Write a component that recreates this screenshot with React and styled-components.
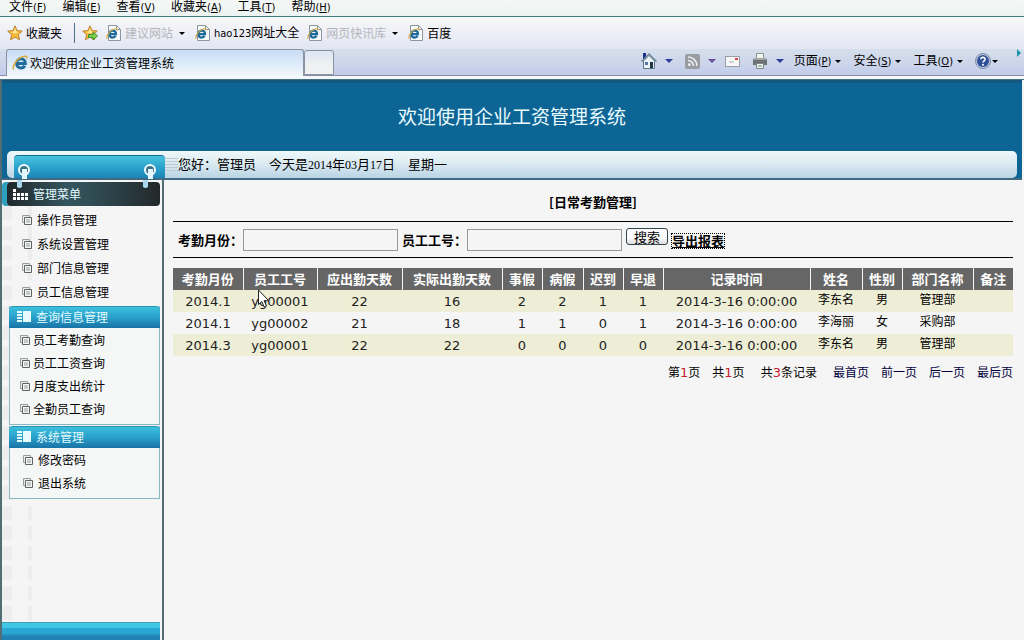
import React from "react";
import styled, { createGlobalStyle, css } from "styled-components";

const GlobalStyle = createGlobalStyle`
  *, *::before, *::after { box-sizing: border-box; }
  body {
    margin: 0;
    background: #f5f5f5;
    color: #000;
    font: 12px/16px "Noto Sans CJK SC", sans-serif;
  }
  button { font: inherit; color: inherit; background: none; border: 0; padding: 0; }
  a { color: inherit; text-decoration: none; }
  ul { list-style: none; margin: 0; padding: 0; }
  h1, h2, h3, p { margin: 0; font-size: inherit; font-weight: inherit; }
  svg { display: block; flex: none; }
`;

const Page = styled.div`
  display: flex;
  flex-direction: column;
  min-height: 100vh;
`;

/* Browser chrome */
const Latin = styled.span`
  font-family: "DejaVu Sans Condensed", "DejaVu Sans", sans-serif;
  font-size: 11px;
`;

const MenuBar = styled.nav`
  display: flex;
  align-items: flex-start;
  gap: 16px;
  height: 17px;
  padding: 0 9px;
  background: linear-gradient(#f5f7f6, #ecf4f3);
  border-bottom: 1px solid #3d7c80;
  line-height: 12px;
  white-space: nowrap;
`;

const FavoritesBar = styled.nav`
  display: flex;
  align-items: center;
  height: 32px;
  padding: 0 7px;
  background: linear-gradient(#f6f8f7 0%, #f0f0f7 40%, #e2e6f3 100%);
  white-space: nowrap;
`;

const FavButton = styled.button`
  display: flex;
  align-items: center;
  gap: 3px;
  margin-right: ${(p) => p.$after || 10}px;
  color: ${(p) => (p.$dim ? "#b4b5bb" : "#000")};
`;

const Separator = styled.span`
  width: 1px;
  height: 20px;
  margin-right: 7px;
  background: #4d7388;
`;

const Caret = styled.span`
  border: ${(p) => p.$size || 3}px solid transparent;
  border-top-color: ${(p) => p.$color || "#000"};
  border-bottom: 0;
  margin-left: ${(p) => p.$gap || 0}px;
`;

const TabBar = styled.div`
  display: flex;
  align-items: flex-end;
  height: 27px;
  padding-left: 6px;
  background: linear-gradient(#d5dfec, #cdd6ea 50%, #c2cceb);
  border-bottom: 1px solid #8c8ea6;
`;

const Tab = styled.button`
  display: flex;
  align-items: center;
  gap: 2px;
  width: 298px;
  height: 27px;
  margin-bottom: -1px;
  padding: 0 5px;
  border: 1px solid #8a93a3;
  border-bottom: 0;
  border-radius: 3px 3px 0 0;
  background: linear-gradient(#c9dcf3, #dcebf9 50%, #f1f6fa);
`;

const NewTab = styled.button`
  width: 30px;
  height: 25px;
  border: 1px solid #8a93a3;
  border-radius: 3px 3px 0 0;
  background: linear-gradient(#dbe5f2, #eff1f2 60%);
`;

const CommandBar = styled.div`
  display: flex;
  align-items: center;
  height: 26px;
  margin-left: auto;
  padding: 0 3px 2px 0;
  white-space: nowrap;
`;

const Command = styled.button`
  display: flex;
  align-items: center;
  margin-right: ${(p) => p.$after || 12}px;
`;

const MoreArrow = styled.span`
  align-self: flex-start;
  margin-left: 18px;
  border: 4px solid transparent;
  border-left-color: #1a93a6;
  border-right: 0;
`;

const ChromeEdge = styled.div`
  height: 4px;
  background: #f3f8fb;
  border-bottom: 1px solid #466f80;
`;

/* Application shell */
const Shell = styled.div`
  display: flex;
  flex: 1;
  flex-direction: column;
  border-left: 2px solid #536d75;
`;

const Banner = styled.header`
  margin-right: 2px;
  background: #0d6595;
  border-bottom: 2px solid #3f6a80;
`;

const BannerTitle = styled.h1`
  padding: 17px 0 19px;
  color: #e9fbff;
  font-size: 19px;
  line-height: 32px;
  text-align: center;
  border-top: 3px solid #145a80;
`;

const InfoBar = styled.div`
  display: flex;
  align-items: center;
  height: 27px;
  margin: 0 5px;
  border-radius: 5px;
  background: linear-gradient(#eef8f9, #dcebf2 45%, #b9d4e4);
  font-size: 13px;
`;

const BinderTab = styled.div`
  position: relative;
  align-self: flex-end;
  width: 151px;
  height: 23px;
  margin-left: 7px;
  border-radius: 4px 4px 0 0;
  border-top: 1px solid #156a91;
  background: linear-gradient(#48c3df, #2ba3cc 50%, #1c84b6);
`;

const Hook = styled.svg`
  position: absolute;
  top: 7px;
  left: ${(p) => p.$left}px;
  z-index: 2;
`;

const Grip = styled.span`
  width: 13px;
  height: 14px;
  background: repeating-linear-gradient(#bccbd2 0 1px, transparent 1px 3px);
`;

const Greeting = styled.p`
  display: flex;
  gap: 13px;
  white-space: nowrap;
`;

const DateNumber = styled.span`
  font: 12px "Liberation Serif", serif;
`;

const Body = styled.div`
  display: flex;
  flex: 1;
`;

/* Sidebar */
const Sidebar = styled.aside`
  display: flex;
  flex: none;
  flex-direction: column;
  width: 162px;
  border-right: 2px solid #536d75;
  padding-right: 2px;
  background:
    repeating-linear-gradient(#f5f5f5 0 6px, transparent 6px 20px) 0 0 / 30px 100% no-repeat,
    linear-gradient(90deg, #ededed 10px, #f5f5f5 10px 26px, #ededed 26px) 0 0 / 30px 100% no-repeat;
`;

const Section = styled.section`
  margin: ${(p) => (p.$dark ? "0" : "0 0 1px 7px")};
  ${(p) =>
    !p.$dark &&
    css`
      border: 1px solid #86b7c5;
      border-top: 0;
      background: #f5f7f7;
    `}
`;

const SectionTitle = styled.h2`
  display: flex;
  align-items: center;
  gap: 5px;
  color: #e2fbff;
  ${(p) =>
    p.$dark
      ? css`
          height: 24px;
          margin: 2px 0 0 5px;
          padding-left: 6px;
          border-radius: 4px;
          background: linear-gradient(90deg, #20282b, #35565f 40%, #2c4148 70%, #23282a);
          box-shadow: -5px 0 0 #2da0bd;
        `
      : css`
          height: 22px;
          margin: 0 -1px;
          padding: 0 0 2px 8px;
          border-radius: 4px 4px 0 0;
          border-top: 1px solid #2a93b5;
          background: linear-gradient(#3cc0dc, #2a9fca 50%, #1873a6);
        `}
`;

const MenuList = styled.ul`
  padding: ${(p) => p.$pad};
`;

const MenuItem = styled.li`
  height: ${(p) => p.$row}px;
`;

const MenuLink = styled.a`
  display: flex;
  align-items: center;
  gap: ${(p) => p.$gap}px;
  height: 100%;
`;

const SidebarFoot = styled.div`
  height: 18px;
  margin-top: auto;
  border-top: 1px solid #3f9fb5;
  background: linear-gradient(#41c7e4 0 30%, #2aa6d3 30% 60%, #2181b5 80%);
`;

/* Content */
const Content = styled.main`
  flex: 1;
  min-width: 0;
  padding: 14px 11px 0 9px;
`;

const PageTitle = styled.h2`
  padding-bottom: 11px;
  font-size: 13px;
  font-weight: 700;
  text-align: center;
`;

const SearchForm = styled.form`
  display: flex;
  align-items: center;
  height: 37px;
  margin-bottom: 10px;
  padding-left: 5px;
  border: solid #000;
  border-width: 1px 0;
  font-size: 13px;
  white-space: nowrap;
`;

const Label = styled.label`
  font-weight: 700;
`;

const TextInput = styled.input`
  width: 155px;
  height: 22px;
  margin-right: 4px;
  padding: 0 4px;
  border: 1px solid #8f9b9d;
  background: #f5f5f5;
  font: inherit;
`;

const SearchButton = styled.button`
  width: 42px;
  height: 17px;
  margin: 0 4px 6px 0;
  border: 1px solid #33444c;
  border-radius: 3px;
  background: linear-gradient(#fbfbfb 60%, #dcdcdc);
  line-height: 15px;
`;

const ExportLink = styled.a`
  margin-top: 2px;
  font-weight: 700;
  line-height: 14px;
  outline: 1px dotted #000;
  text-decoration: underline;
`;

const Table = styled.table`
  width: 100%;
  table-layout: fixed;
  border-collapse: collapse;
  text-align: center;
  white-space: nowrap;
`;

const Col = styled.col`
  width: ${(p) => (p.$w ? `${p.$w}px` : "auto")};
`;

const Th = styled.th`
  height: 22px;
  padding: 0;
  background: #666;
  color: #fff;
  font-size: 13px;
  & + & { border-left: 1px solid #f5f5f5; }
`;

const Row = styled.tr`
  background: ${(p) => (p.$odd ? "#eeeed6" : "#f5f5f5")};
`;

const Td = styled.td`
  position: relative;
  height: 22px;
  padding: ${(p) => (p.$text ? "0 0 2px" : "1px 0 0")};
  color: ${(p) => (p.$text ? "#000" : "#222")};
  font-family: "DejaVu Sans", "Noto Sans CJK SC", sans-serif;
  font-size: ${(p) => (p.$text ? 12 : 13)}px;
`;

const Cursor = styled.svg`
  position: absolute;
  top: -1px;
  left: 15px;
`;

const Pager = styled.nav`
  display: flex;
  justify-content: flex-end;
  gap: 12px;
  padding-top: 8px;
  white-space: nowrap;
`;

const PagerText = styled.span`
  margin-right: ${(p) => (p.$wide ? 4 : 0)}px;
`;

const PagerNumber = styled.span`
  color: #c8202c;
  font: 13px "DejaVu Sans", sans-serif;
`;

const PagerLink = styled.a`
  color: #00003c;
`;

/* Icons */
const EMark = () => (
  <>
    <path d="M4.500 9h8C12.500 6 10.500 4.600 8.400 4.600 6 4.600 4.400 6.500 4.400 9s1.600 4.200 4 4.200c1.700 0 2.900-.8 3.500-2.200" fill="none" stroke="#1f6c9c" strokeWidth="2.800" />
    <path d="M1.800 14.600C-.5 12.500 4 5 9.500 2.800c3-1.200 5-.8 4.400 1.500" fill="none" stroke="#d9a63a" strokeWidth="1.400" />
  </>
);

const IePage = () => (
  <svg width="16" height="16" viewBox="0 0 16 16" aria-hidden="true">
    <path d="M2.500.5h8l4 4v11h-12z" fill="#f8fafb" stroke="#8b969c" />
    <path d="M10.500.5v4h4" fill="none" stroke="#8b969c" />
    <g transform="translate(0 2) scale(.8)"><EMark /></g>
  </svg>
);

const IeLogo = () => (
  <svg width="16" height="16" viewBox="0 1 15 15" aria-hidden="true"><EMark /></svg>
);

const Star = ({ add }) => (
  <svg width="16" height="16" viewBox="0 0 16 16" aria-hidden="true">
    <path d="M8 .8l2.100 4.800 5.200.5-3.900 3.500 1.100 5.200L8 12.100l-4.500 2.700 1.100-5.200L.7 6.100l5.200-.5z" fill="#fbb93a" stroke="#b98432" />
    <path d="M8 3l1.200 3.500 2.800.5-4 1.500L4 7l2.800-.5z" fill="#fdeaa0" />
    {add && <path d="M6.500 9.500h4.500v-2.500l4.500 4-4.500 4v-2.500H6.500z" fill="#7ed04a" stroke="#3d8f2b" />}
  </svg>
);

const Home = () => (
  <svg width="16" height="16" viewBox="0 0 16 16" aria-hidden="true">
    <path d="M2 0h3v6H2z" fill="#1f2f8f" />
    <path d="M2.500 8v7.500h11V8L8 2.500z" fill="#edf3f6" stroke="#5b7889" />
    <path d="M.5 8.500L8 1l7.500 7.500" fill="none" stroke="#6c8496" strokeWidth="1.400" />
    <path d="M4 9h3v3H4z" fill="#53779e" />
    <path d="M9 9h3v6H9z" fill="#1d3447" />
  </svg>
);

const Feed = () => (
  <svg width="15" height="15" viewBox="0 0 15 15" aria-hidden="true">
    <rect width="15" height="15" rx="2" fill="#999ca1" />
    <path d="M3 6.500A5.500 5.500 0 018.500 12M3 3a9 9 0 019 9" fill="none" stroke="#eef0f4" strokeWidth="1.500" />
    <circle cx="4.300" cy="10.700" r="1.400" fill="#eef0f4" />
  </svg>
);

const Mail = () => (
  <svg width="15" height="11" viewBox="0 0 15 11" aria-hidden="true">
    <rect x=".5" y=".5" width="14" height="10" fill="#f7f7f8" stroke="#9a9ca6" />
    <path d="M10 2h3v2h-3z" fill="#d8404a" />
    <path d="M4 6h5" stroke="#b0b3bd" />
  </svg>
);

const Printer = () => (
  <svg width="16" height="16" viewBox="0 0 16 16" aria-hidden="true">
    <path d="M4.500.5h7v6h-7z" fill="#f4f5f2" stroke="#8b9093" />
    <path d="M1 6h14v6H1z" fill="#6d7375" />
    <path d="M2 5h12v2H2z" fill="#a1a7a6" />
    <path d="M4.500 10.500h7v5h-7z" fill="#eef4f0" stroke="#7c8588" />
    <path d="M6 13h4" stroke="#4b9a5d" />
  </svg>
);

const Help = () => (
  <svg width="16" height="16" viewBox="0 0 16 16" aria-hidden="true">
    <circle cx="8" cy="8" r="7.500" fill="#b6c3dd" stroke="#7e8aa9" />
    <circle cx="8" cy="8" r="6" fill="#2f5098" />
    <path d="M5.800 6.300C5.800 3.700 10.300 3.800 10.200 6.300 10.100 7.800 8 7.900 8 9.600" fill="none" stroke="#fff" strokeWidth="1.600" />
    <circle cx="8" cy="11.700" r="1" fill="#fff" />
  </svg>
);

const Sheets = () => (
  <svg width="10" height="10" viewBox="0 0 10 10" aria-hidden="true">
    <path d="M.5.500h7v7h-7z" fill="#eceeee" stroke="#9a9d9d" />
    <path d="M2.500 2.500h7v7h-7z" fill="#f4f5f5" stroke="#5e6262" />
    <path d="M4 5h4M4 7h4" stroke="#9a9d9d" />
  </svg>
);

const Dots = () => (
  <svg width="15" height="11" viewBox="0 0 15 11" aria-hidden="true" fill="#fff">
    <path d="M0 0h3v3H0zM0 4h3v3H0zM4 4h3v3H4zM8 4h3v3H8zM12 4h3v3h-3zM0 8h3v3H0zM4 8h3v3H4zM8 8h3v3H8zM12 8h3v3h-3z" />
  </svg>
);

const Panel = () => (
  <svg width="14" height="11" viewBox="0 0 14 11" aria-hidden="true" fill="#e8fbff">
    <path d="M6 0h8v11H6zM0 0h5v2H0zM0 3h5v2H0zM0 6h5v2H0zM0 9h5v2H0z" />
  </svg>
);

const BinderHook = ({ left }) => (
  <Hook $left={left} width="16" height="26" viewBox="0 0 16 26" aria-hidden="true">
    <circle cx="8" cy="7" r="5" fill="#3a7186" stroke="#f1fbfd" strokeWidth="2" />
    <path d="M6 6h5v10H6z" fill="#e4f5fb" />
    <path d="M1 17h5v7q-2.500 2-5 0z" fill="#a9d8ee" />
  </Hook>
);

const browserMenus = [["文件", "F"], ["编辑", "E"], ["查看", "V"], ["收藏夹", "A"], ["工具", "T"], ["帮助", "H"]];
const commands = [["页面", "P"], ["安全", "S"], ["工具", "O"]];

const Access = ({ label, letter }) => (
  <span>{label}<Latin>(<u>{letter}</u>)</Latin></span>
);

const sections = [
  { title: "管理菜单", dark: true, row: 24, gap: 5, pad: "2px 0 2px 20px", items: ["操作员管理", "系统设置管理", "部门信息管理", "员工信息管理"] },
  { title: "查询信息管理", row: 23, gap: 3, pad: "0 0 4px 10px", items: ["员工考勤查询", "员工工资查询", "月度支出统计", "全勤员工查询"] },
  { title: "系统管理", row: 23, gap: 5, pad: "0 0 4px 13px", items: ["修改密码", "退出系统"] },
];

const columns = [
  ["考勤月份", 70], ["员工工号", 74], ["应出勤天数", 85], ["实际出勤天数", 100],
  ["事假", 40], ["病假", 41], ["迟到", 40], ["早退", 40], ["记录时间", 0],
  ["姓名", 52], ["性别", 40], ["部门名称", 71], ["备注", 40],
];

const records = [
  ["2014.1", "yg00001", "22", "16", "2", "2", "1", "1", "2014-3-16 0:00:00", "李东名", "男", "管理部", ""],
  ["2014.1", "yg00002", "21", "18", "1", "1", "0", "1", "2014-3-16 0:00:00", "李海丽", "女", "采购部", ""],
  ["2014.3", "yg00001", "22", "22", "0", "0", "0", "0", "2014-3-16 0:00:00", "李东名", "男", "管理部", ""],
];

export default function App() {
  return (
    <Page>
      <GlobalStyle />
      <MenuBar>
        {browserMenus.map(([label, letter]) => (
          <button key={letter} type="button"><Access label={label} letter={letter} /></button>
        ))}
      </MenuBar>
      <FavoritesBar>
        <FavButton type="button" $after={12}><Star />收藏夹</FavButton>
        <Separator />
        <FavButton type="button" $after={8} aria-label="添加到收藏夹栏"><Star add /></FavButton>
        <FavButton type="button" $dim><IePage />建议网站<Caret $gap={3} /></FavButton>
        <FavButton type="button" $after={8}><IePage /><span><Latin>hao123</Latin>网址大全</span></FavButton>
        <FavButton type="button" $dim><IePage />网页快讯库<Caret $gap={3} /></FavButton>
        <FavButton type="button"><IePage />百度</FavButton>
      </FavoritesBar>
      <TabBar>
        <Tab type="button"><IeLogo />欢迎使用企业工资管理系统</Tab>
        <NewTab type="button" aria-label="新选项卡" />
        <CommandBar>
          <Command type="button" aria-label="主页"><Home /><Caret $gap={8} $size={4} $color="#2c3f9c" /></Command>
          <Command type="button" $after={9} aria-label="源"><Feed /><Caret $gap={8} $size={4} $color="#6b4a9c" /></Command>
          <Command type="button" aria-label="阅读邮件"><Mail /></Command>
          <Command type="button" $after={10} aria-label="打印"><Printer /><Caret $gap={8} $size={4} $color="#2c3f9c" /></Command>
          {commands.map(([label, letter]) => (
            <Command key={letter} type="button"><Access label={label} letter={letter} /><Caret $gap={4} /></Command>
          ))}
          <Command type="button" $after={1} aria-label="帮助"><Help /><Caret $gap={1} /></Command>
          <MoreArrow />
        </CommandBar>
      </TabBar>
      <ChromeEdge />
      <Shell>
        <Banner>
          <BannerTitle>欢迎使用企业工资管理系统</BannerTitle>
          <InfoBar>
            <BinderTab>
              <BinderHook left={2} />
              <BinderHook left={128} />
            </BinderTab>
            <Grip />
            <Greeting>
              <span>您好：管理员</span>
              <span>
                今天是<DateNumber>2014</DateNumber>年<DateNumber>03</DateNumber>月<DateNumber>17</DateNumber>日
              </span>
              <span>星期一</span>
            </Greeting>
          </InfoBar>
        </Banner>
        <Body>
          <Sidebar>
            {sections.map((s) => (
              <Section key={s.title} $dark={s.dark}>
                <SectionTitle $dark={s.dark}>{s.dark ? <Dots /> : <Panel />}{s.title}</SectionTitle>
                <MenuList $pad={s.pad}>
                  {s.items.map((item) => (
                    <MenuItem key={item} $row={s.row}>
                      <MenuLink href="#" $gap={s.gap}><Sheets />{item}</MenuLink>
                    </MenuItem>
                  ))}
                </MenuList>
              </Section>
            ))}
            <SidebarFoot />
          </Sidebar>
          <Content>
            <PageTitle>[日常考勤管理]</PageTitle>
            <SearchForm onSubmit={(e) => e.preventDefault()}>
              <Label htmlFor="month">考勤月份：</Label>
              <TextInput id="month" type="text" />
              <Label htmlFor="worker">员工工号：</Label>
              <TextInput id="worker" type="text" />
              <SearchButton type="submit">搜索</SearchButton>
              <ExportLink href="#">导出报表</ExportLink>
            </SearchForm>
            <Table>
              <colgroup>
                {columns.map(([name, w]) => <Col key={name} $w={w} />)}
              </colgroup>
              <thead>
                <tr>{columns.map(([name]) => <Th key={name} scope="col">{name}</Th>)}</tr>
              </thead>
              <tbody>
                {records.map((record, r) => (
                  <Row key={r} $odd={r % 2 === 0}>
                    {record.map((value, c) => (
                      <Td key={c} $text={c > 8}>
                        {value}
                        {r === 0 && c === 1 && (
                          <Cursor width="12" height="20" viewBox="0 0 12 20" aria-hidden="true">
                            <path d="M.5 1v14.500l3.300-3 2.400 5.500 2.300-1-2.400-5.300h4.600z" fill="#fff" stroke="#222" />
                          </Cursor>
                        )}
                      </Td>
                    ))}
                  </Row>
                ))}
              </tbody>
            </Table>
            <Pager>
              <PagerText>第<PagerNumber>1</PagerNumber>页</PagerText>
              <PagerText $wide>共<PagerNumber>1</PagerNumber>页</PagerText>
              <PagerText $wide>共<PagerNumber>3</PagerNumber>条记录</PagerText>
              <PagerLink href="#">最首页</PagerLink>
              <PagerLink href="#">前一页</PagerLink>
              <PagerLink href="#">后一页</PagerLink>
              <PagerLink href="#">最后页</PagerLink>
            </Pager>
          </Content>
        </Body>
      </Shell>
    </Page>
  );
}
